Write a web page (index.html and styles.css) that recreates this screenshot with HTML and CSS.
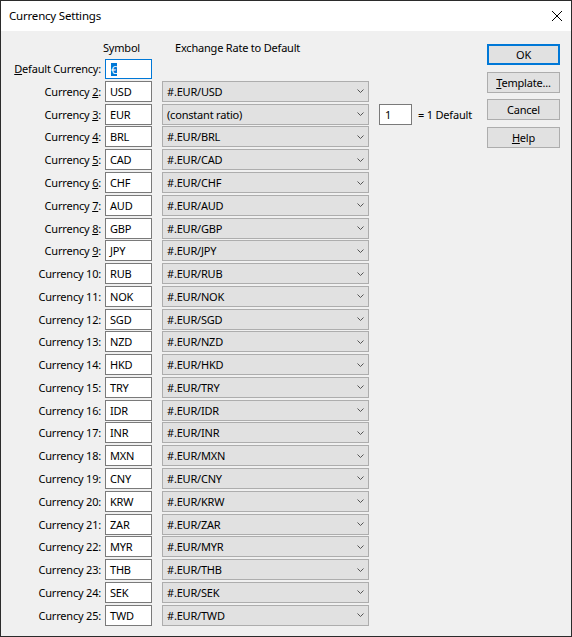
FILE: index.html
```html
<!DOCTYPE html>
<html>
<head>
<meta charset="utf-8">
<link rel="stylesheet" href="styles.css">
</head>
<body>
<div class="window">
  <div class="titlebar">
    <span class="title">Currency Settings</span>
    <svg class="close" width="10" height="10" viewBox="0 0 10 10"><path d="M0 0 L10 10 M10 0 L0 10" stroke="#000" stroke-width="1" fill="none"/></svg>
  </div>
  <div class="body">
    <div class="formwrap">
      <div class="heads">
        <span class="h-symbol">Symbol</span>
        <span class="h-rate">Exchange Rate to Default</span>
      </div>
      <div class="form">
        <div class="lbl"><u>D</u>efault Currency:</div>
        <div class="cell"><div class="edit focus"><span class="sel">€</span></div></div>
        <div class="rowend"></div>

        <div class="lbl">Currency <u>2</u>:</div><div class="cell"><div class="edit">USD</div></div><div class="cell"><div class="combo"><span>#.EUR/USD</span><svg width="7" height="4" viewBox="0 0 7 4"><path d="M0.5 0.5 L3.5 3.5 L6.5 0.5" stroke="#555" fill="none"/></svg></div></div><div class="rowend"></div>
        <div class="lbl">Currency <u>3</u>:</div><div class="cell"><div class="edit">EUR</div></div><div class="cell"><div class="combo"><span>(constant ratio)</span><svg width="7" height="4" viewBox="0 0 7 4"><path d="M0.5 0.5 L3.5 3.5 L6.5 0.5" stroke="#555" fill="none"/></svg></div></div><div class="cell"><div class="edit ratio">1</div></div><div class="eq">= 1 Default</div>
        <div class="lbl">Currency <u>4</u>:</div><div class="cell"><div class="edit">BRL</div></div><div class="cell"><div class="combo"><span>#.EUR/BRL</span><svg width="7" height="4" viewBox="0 0 7 4"><path d="M0.5 0.5 L3.5 3.5 L6.5 0.5" stroke="#555" fill="none"/></svg></div></div><div class="rowend"></div>
        <div class="lbl">Currency <u>5</u>:</div><div class="cell"><div class="edit">CAD</div></div><div class="cell"><div class="combo"><span>#.EUR/CAD</span><svg width="7" height="4" viewBox="0 0 7 4"><path d="M0.5 0.5 L3.5 3.5 L6.5 0.5" stroke="#555" fill="none"/></svg></div></div><div class="rowend"></div>
        <div class="lbl">Currency <u>6</u>:</div><div class="cell"><div class="edit">CHF</div></div><div class="cell"><div class="combo"><span>#.EUR/CHF</span><svg width="7" height="4" viewBox="0 0 7 4"><path d="M0.5 0.5 L3.5 3.5 L6.5 0.5" stroke="#555" fill="none"/></svg></div></div><div class="rowend"></div>
        <div class="lbl">Currency <u>7</u>:</div><div class="cell"><div class="edit">AUD</div></div><div class="cell"><div class="combo"><span>#.EUR/AUD</span><svg width="7" height="4" viewBox="0 0 7 4"><path d="M0.5 0.5 L3.5 3.5 L6.5 0.5" stroke="#555" fill="none"/></svg></div></div><div class="rowend"></div>
        <div class="lbl">Currency <u>8</u>:</div><div class="cell"><div class="edit">GBP</div></div><div class="cell"><div class="combo"><span>#.EUR/GBP</span><svg width="7" height="4" viewBox="0 0 7 4"><path d="M0.5 0.5 L3.5 3.5 L6.5 0.5" stroke="#555" fill="none"/></svg></div></div><div class="rowend"></div>
        <div class="lbl">Currency <u>9</u>:</div><div class="cell"><div class="edit">JPY</div></div><div class="cell"><div class="combo"><span>#.EUR/JPY</span><svg width="7" height="4" viewBox="0 0 7 4"><path d="M0.5 0.5 L3.5 3.5 L6.5 0.5" stroke="#555" fill="none"/></svg></div></div><div class="rowend"></div>
        <div class="lbl">Currency 10:</div><div class="cell"><div class="edit">RUB</div></div><div class="cell"><div class="combo"><span>#.EUR/RUB</span><svg width="7" height="4" viewBox="0 0 7 4"><path d="M0.5 0.5 L3.5 3.5 L6.5 0.5" stroke="#555" fill="none"/></svg></div></div><div class="rowend"></div>
        <div class="lbl">Currency 11:</div><div class="cell"><div class="edit">NOK</div></div><div class="cell"><div class="combo"><span>#.EUR/NOK</span><svg width="7" height="4" viewBox="0 0 7 4"><path d="M0.5 0.5 L3.5 3.5 L6.5 0.5" stroke="#555" fill="none"/></svg></div></div><div class="rowend"></div>
        <div class="lbl">Currency 12:</div><div class="cell"><div class="edit">SGD</div></div><div class="cell"><div class="combo"><span>#.EUR/SGD</span><svg width="7" height="4" viewBox="0 0 7 4"><path d="M0.5 0.5 L3.5 3.5 L6.5 0.5" stroke="#555" fill="none"/></svg></div></div><div class="rowend"></div>
        <div class="lbl">Currency 13:</div><div class="cell"><div class="edit">NZD</div></div><div class="cell"><div class="combo"><span>#.EUR/NZD</span><svg width="7" height="4" viewBox="0 0 7 4"><path d="M0.5 0.5 L3.5 3.5 L6.5 0.5" stroke="#555" fill="none"/></svg></div></div><div class="rowend"></div>
        <div class="lbl">Currency 14:</div><div class="cell"><div class="edit">HKD</div></div><div class="cell"><div class="combo"><span>#.EUR/HKD</span><svg width="7" height="4" viewBox="0 0 7 4"><path d="M0.5 0.5 L3.5 3.5 L6.5 0.5" stroke="#555" fill="none"/></svg></div></div><div class="rowend"></div>
        <div class="lbl">Currency 15:</div><div class="cell"><div class="edit">TRY</div></div><div class="cell"><div class="combo"><span>#.EUR/TRY</span><svg width="7" height="4" viewBox="0 0 7 4"><path d="M0.5 0.5 L3.5 3.5 L6.5 0.5" stroke="#555" fill="none"/></svg></div></div><div class="rowend"></div>
        <div class="lbl">Currency 16:</div><div class="cell"><div class="edit">IDR</div></div><div class="cell"><div class="combo"><span>#.EUR/IDR</span><svg width="7" height="4" viewBox="0 0 7 4"><path d="M0.5 0.5 L3.5 3.5 L6.5 0.5" stroke="#555" fill="none"/></svg></div></div><div class="rowend"></div>
        <div class="lbl">Currency 17:</div><div class="cell"><div class="edit">INR</div></div><div class="cell"><div class="combo"><span>#.EUR/INR</span><svg width="7" height="4" viewBox="0 0 7 4"><path d="M0.5 0.5 L3.5 3.5 L6.5 0.5" stroke="#555" fill="none"/></svg></div></div><div class="rowend"></div>
        <div class="lbl">Currency 18:</div><div class="cell"><div class="edit">MXN</div></div><div class="cell"><div class="combo"><span>#.EUR/MXN</span><svg width="7" height="4" viewBox="0 0 7 4"><path d="M0.5 0.5 L3.5 3.5 L6.5 0.5" stroke="#555" fill="none"/></svg></div></div><div class="rowend"></div>
        <div class="lbl">Currency 19:</div><div class="cell"><div class="edit">CNY</div></div><div class="cell"><div class="combo"><span>#.EUR/CNY</span><svg width="7" height="4" viewBox="0 0 7 4"><path d="M0.5 0.5 L3.5 3.5 L6.5 0.5" stroke="#555" fill="none"/></svg></div></div><div class="rowend"></div>
        <div class="lbl">Currency 20:</div><div class="cell"><div class="edit">KRW</div></div><div class="cell"><div class="combo"><span>#.EUR/KRW</span><svg width="7" height="4" viewBox="0 0 7 4"><path d="M0.5 0.5 L3.5 3.5 L6.5 0.5" stroke="#555" fill="none"/></svg></div></div><div class="rowend"></div>
        <div class="lbl">Currency 21:</div><div class="cell"><div class="edit">ZAR</div></div><div class="cell"><div class="combo"><span>#.EUR/ZAR</span><svg width="7" height="4" viewBox="0 0 7 4"><path d="M0.5 0.5 L3.5 3.5 L6.5 0.5" stroke="#555" fill="none"/></svg></div></div><div class="rowend"></div>
        <div class="lbl">Currency 22:</div><div class="cell"><div class="edit">MYR</div></div><div class="cell"><div class="combo"><span>#.EUR/MYR</span><svg width="7" height="4" viewBox="0 0 7 4"><path d="M0.5 0.5 L3.5 3.5 L6.5 0.5" stroke="#555" fill="none"/></svg></div></div><div class="rowend"></div>
        <div class="lbl">Currency 23:</div><div class="cell"><div class="edit">THB</div></div><div class="cell"><div class="combo"><span>#.EUR/THB</span><svg width="7" height="4" viewBox="0 0 7 4"><path d="M0.5 0.5 L3.5 3.5 L6.5 0.5" stroke="#555" fill="none"/></svg></div></div><div class="rowend"></div>
        <div class="lbl">Currency 24:</div><div class="cell"><div class="edit">SEK</div></div><div class="cell"><div class="combo"><span>#.EUR/SEK</span><svg width="7" height="4" viewBox="0 0 7 4"><path d="M0.5 0.5 L3.5 3.5 L6.5 0.5" stroke="#555" fill="none"/></svg></div></div><div class="rowend"></div>
        <div class="lbl">Currency 25:</div><div class="cell"><div class="edit">TWD</div></div><div class="cell"><div class="combo"><span>#.EUR/TWD</span><svg width="7" height="4" viewBox="0 0 7 4"><path d="M0.5 0.5 L3.5 3.5 L6.5 0.5" stroke="#555" fill="none"/></svg></div></div><div class="rowend"></div>
      </div>
    </div>
    <div class="buttons">
      <div class="btn default">OK</div>
      <div class="btn"><u>T</u>emplate...</div>
      <div class="btn">Cancel</div>
      <div class="btn"><u>H</u>elp</div>
    </div>
  </div>
</div>
</body>
</html>
```

FILE: styles.css
```css
html, body {
  margin: 0;
  padding: 0;
  background: #ffffff;
}
body {
  font-family: "Noto Sans", "Open Sans", sans-serif;
  font-size: 11px;
  letter-spacing: -0.2px;
  color: #000;
}
.window {
  width: 572px;
  height: 637px;
  box-sizing: border-box;
  border: 1px solid #2b2b2b;
  background: #f0f0f0;
  display: flex;
  flex-direction: column;
}
.titlebar {
  height: 30px;
  background: #ffffff;
  display: flex;
  align-items: center;
  padding-left: 8px;
  padding-right: 9px;
}
.title {
  flex: 1;
  font-size: 11.5px;
  line-height: 16px;
  margin-top: -1px;
}
.close {
  display: block;
  margin-top: -1px;
}
.body {
  display: flex;
  flex: 1;
}
.formwrap {
  display: flex;
  flex-direction: column;
}
.heads {
  margin-top: 9px;
  height: 16px;
  line-height: 16px;
  display: flex;
}
.h-symbol {
  margin-left: 102px;
  width: 72px;
}
.form {
  margin-top: 2.2px;
  display: grid;
  grid-template-columns: 104px 57px 217px 39px auto;
  grid-auto-rows: 21px;
  row-gap: 1.78px;
}
.lbl {
  grid-column: 1;
  text-align: right;
  padding-right: 4px;
  line-height: 21px;
  white-space: nowrap;
}
.cell {
  display: flex;
}
.rowend {
  grid-column: 4 / span 2;
}
.edit {
  width: 47px;
  height: 21px;
  box-sizing: border-box;
  border: 1px solid #7a7a7a;
  background: #ffffff;
  padding-left: 4px;
  line-height: 19px;
}
.edit.focus {
  border-color: #0078d7;
  padding-left: 5px;
  height: 20px;
  line-height: 18px;
  margin-top: 0.5px;
}
.sel {
  background: #0078d7;
  color: #ffffff;
  display: inline-block;
  line-height: 13px;
  vertical-align: middle;
}
.edit.ratio {
  width: 33px;
  padding-left: 5px;
}
.eq {
  line-height: 21px;
  white-space: nowrap;
}
.combo {
  width: 207px;
  height: 21px;
  box-sizing: border-box;
  border: 1px solid #adadad;
  background: #e1e1e1;
  padding-left: 4px;
  padding-right: 4px;
  line-height: 19px;
  display: flex;
  align-items: center;
  justify-content: space-between;
}
.combo span {
  line-height: 19px;
}
.combo svg {
  display: block;
}
.buttons {
  margin-left: auto;
  margin-right: 11px;
  margin-top: 13px;
  display: flex;
  flex-direction: column;
  gap: 6.67px;
}
.btn {
  width: 73px;
  height: 21px;
  box-sizing: border-box;
  border: 1px solid #adadad;
  background: #e1e1e1;
  text-align: center;
  line-height: 19px;
}
.btn.default {
  border: 2px solid #0078d7;
  line-height: 17px;
}
```
